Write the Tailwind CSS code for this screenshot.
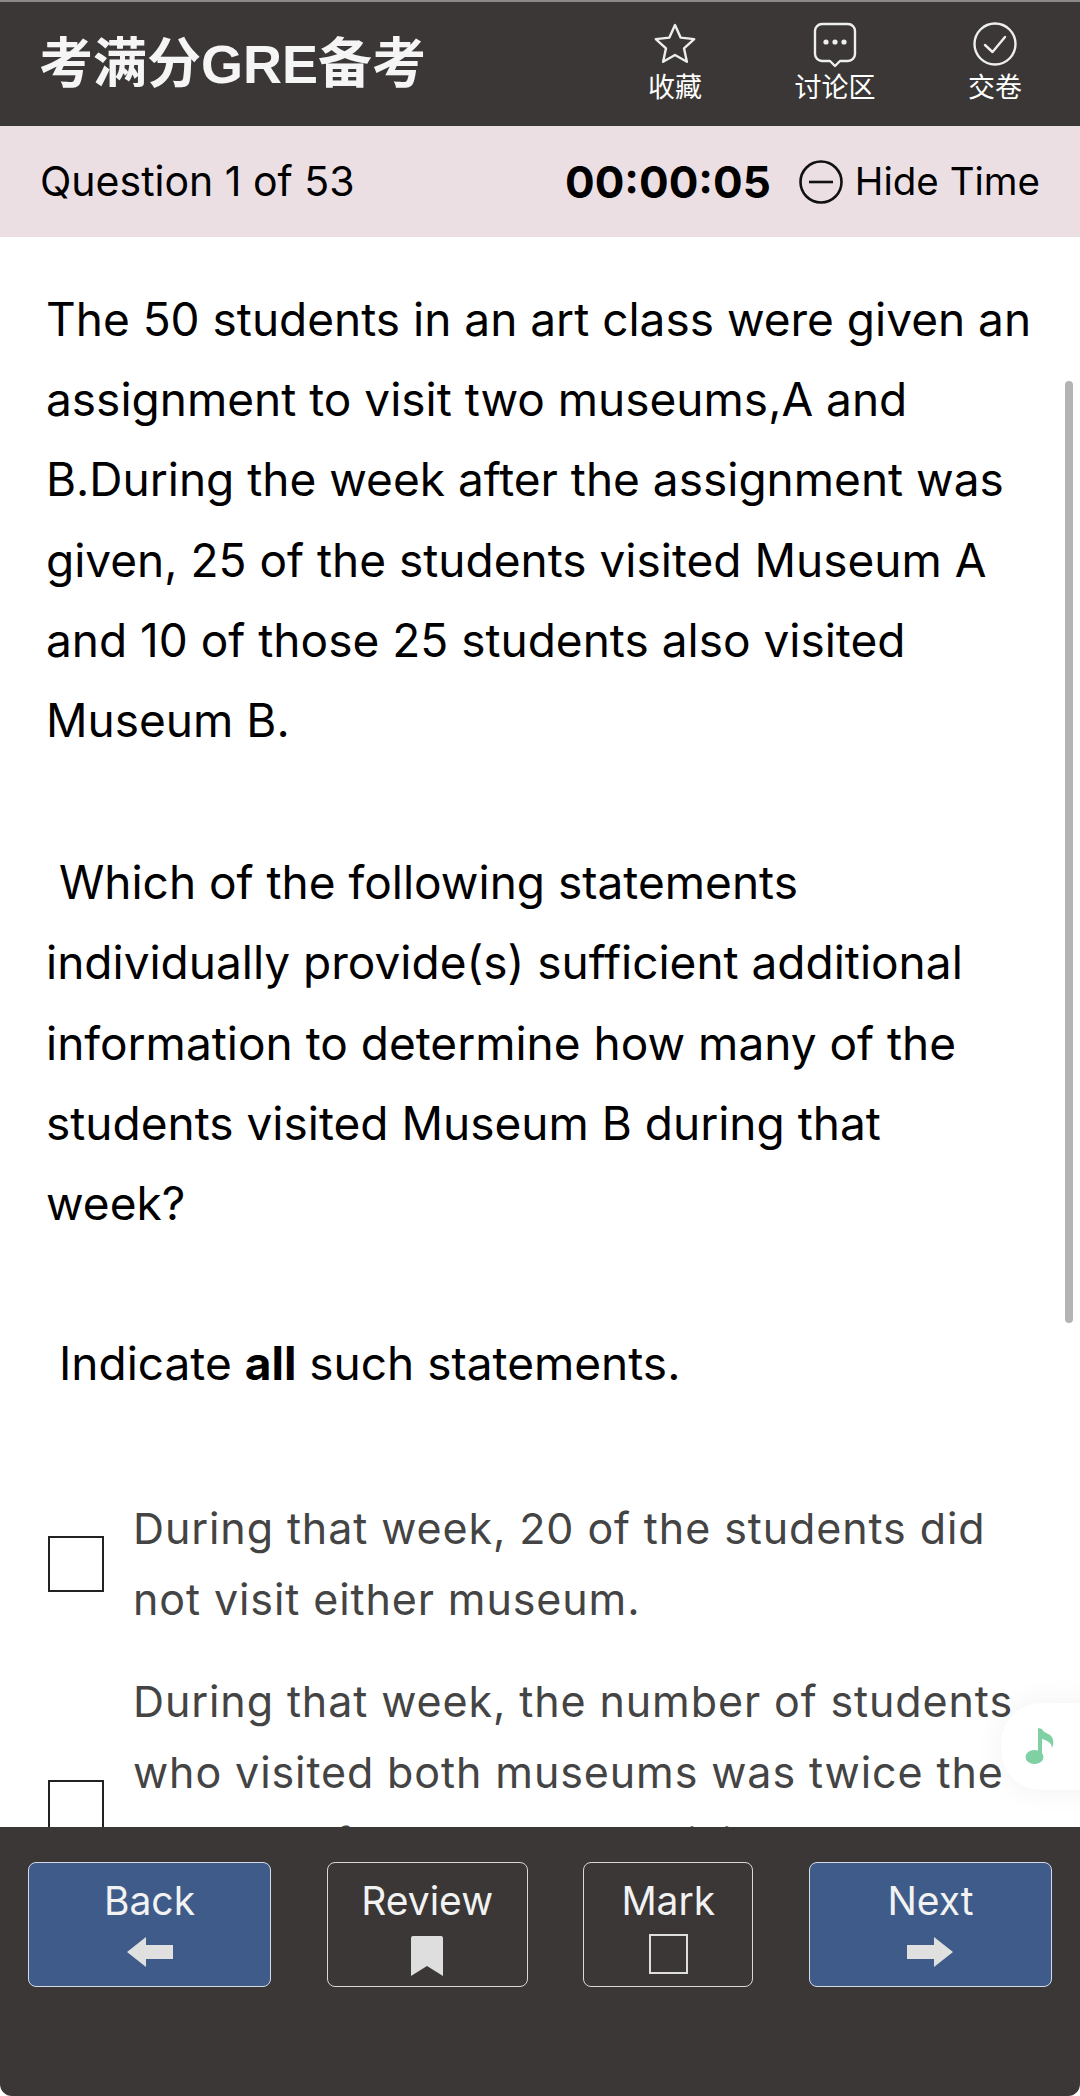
<!DOCTYPE html>
<html lang="zh-CN">
<head>
    <meta charset="UTF-8">
    <title>考满分GRE备考</title>
    <script src="https://cdn.jsdelivr.net/npm/@tailwindcss/browser@4"></script>
</head>
<body class="font-['Inter','Noto_Sans_CJK_SC',sans-serif] bg-white">
<div class="relative w-[1080px] h-[2096px] flex flex-col overflow-hidden">

    <!-- Header -->
    <header class="h-[126px] shrink-0 bg-[#3a3736] border-t-[2px] border-[#8c8a89] flex items-center text-white">
        <h1 class="ml-[39px] text-[54px] font-bold leading-none text-[#f5f5f5] mt-[-1px] font-['Liberation_Sans','Noto_Sans_CJK_SC',sans-serif]">考满分GRE备考</h1>
        <div class="ml-auto mr-[5px] flex h-full">
            <div class="w-[160px] flex flex-col items-center">
                <svg class="mt-[20px]" width="44" height="44" viewBox="0 0 44 44" fill="none" stroke="#eeeeee" stroke-width="2.4" stroke-linejoin="round"><path d="M22 3l5.6 12.6 13.600 1.500-10.200 9.200 2.900 13.500L22 33l-11.900 6.800 2.900-13.500-10.200-9.200 13.600-1.500z"/></svg>
                <span class="text-[27px] leading-[30px] mt-[7px]">收藏</span>
            </div>
            <div class="w-[160px] flex flex-col items-center">
                <svg class="mt-[20px]" width="44" height="46" viewBox="0 0 44 46" fill="none" stroke="#eeeeee" stroke-width="2.4" stroke-linejoin="round"><path d="M9 2h26a7 7 0 0 1 7 7v23a7 7 0 0 1-7 7h-8l-5 5-5-5H9a7 7 0 0 1-7-7V9a7 7 0 0 1 7-7z"/><circle cx="13" cy="20" r="2.600" fill="#eeeeee" stroke="none"/><circle cx="22" cy="20" r="2.600" fill="#eeeeee" stroke="none"/><circle cx="31" cy="20" r="2.600" fill="#eeeeee" stroke="none"/></svg>
                <span class="text-[27px] leading-[30px] mt-[5px]">讨论区</span>
            </div>
            <div class="w-[160px] flex flex-col items-center">
                <svg class="mt-[20px]" width="44" height="44" viewBox="0 0 44 44" fill="none" stroke="#eeeeee" stroke-width="2.400"><circle cx="22" cy="22" r="20.500"/><path d="M12 23l7.500 7L32 15" stroke-linecap="round" stroke-linejoin="round"/></svg>
                <span class="text-[27px] leading-[30px] mt-[7px]">交卷</span>
            </div>
        </div>
    </header>

    <!-- Timer strip -->
    <div class="h-[111px] shrink-0 bg-[#ecdfe4] flex items-center text-black">
        <span class="ml-[40px] text-[41px] leading-none">Question 1 of 53</span>
        <span class="ml-auto text-[44px] leading-none font-bold">00:00:05</span>
        <svg class="ml-[28px]" width="44" height="44" viewBox="0 0 44 44" fill="none" stroke="#111111" stroke-width="2.600"><circle cx="22" cy="22" r="20.500"/><path d="M10 22h24"/></svg>
        <span class="ml-[12px] mr-[40px] text-[38.5px] leading-none">Hide Time</span>
    </div>

    <!-- Question -->
    <main class="flex-1 min-h-0 overflow-hidden pt-[42px] text-black">
        <div class="pl-[46px] text-[46px] leading-[80.2px]">
            <p>The 50 students in an art class were given an<br>assignment to visit two museums,A and<br>B.During the week after the assignment was<br>given, 25 of the students visited Museum A<br>and 10 of those 25 students also visited<br>Museum B.</p>
            <p class="mt-[82px]">&nbsp;Which of the following statements<br>individually provide(s) sufficient additional<br>information to determine how many of the<br>students visited Museum B during that<br>week?</p>
            <p class="mt-[80px]">&nbsp;Indicate <b>all</b> such statements.</p>
        </div>

        <div class="mt-[90px] text-[43px] leading-[71px] tracking-[0.9px] text-[#444444]">
            <label class="flex items-center pl-[48px]">
                <span class="w-[56px] h-[56px] shrink-0 border-[2px] border-[#222222] bg-white"></span>
                <span class="ml-[29px]">During that week, 20 of the students did<br>not visit either museum.</span>
            </label>
            <label class="flex items-center pl-[48px] mt-[31px]">
                <span class="w-[56px] h-[56px] shrink-0 border-[2px] border-[#222222] bg-white"></span>
                <span class="ml-[29px]">During that week, the number of students<br>who visited both museums was twice the<br>number of students who visited only<br>Museum A.</span>
            </label>
        </div>
    </main>

    <!-- Scrollbar -->
    <div class="absolute left-[1065px] top-[381px] w-[8px] h-[942px] rounded-full bg-[#b4b4b4]"></div>

    <!-- Floating music button -->
    <div class="absolute left-[1001px] top-[1703px] w-[100px] h-[87px] rounded-l-[40px] bg-white shadow-[0_0_30px_rgba(0,0,0,0.06)] flex items-center pl-[24px]">
        <svg width="30" height="38" viewBox="0 0 30 38" fill="#7fd0a2"><ellipse cx="9.500" cy="29" rx="9" ry="7"/><path d="M13 0l4 1c1 3 5 4 8 6 4 3 4 9 2 13 0-4-3-7-10-9v18h-4z"/></svg>
    </div>

    <!-- Bottom bar -->
    <footer class="relative h-[269px] shrink-0 bg-[#3a3736] rounded-b-[12px] flex justify-between items-start pt-[35px] px-[28px] text-[#f2f2f2]">
        <button class="w-[243px] h-[125px] rounded-[8px] border-[1.5px] border-[#d5dbe6] bg-[#3e5b8a] flex flex-col items-center">
            <span class="text-[39px] leading-none mt-[18px]">Back</span>
            <svg class="mt-[17px]" width="46" height="30" viewBox="0 0 46 30" fill="#e0e0e0"><path d="M0 15 19 0v8h27v14H19v8z"/></svg>
        </button>
        <button class="w-[201px] h-[125px] rounded-[8px] border-[1.5px] border-[#d8d8d8] flex flex-col items-center">
            <span class="text-[39px] leading-none mt-[18px]">Review</span>
            <svg class="mt-[16px]" width="32" height="40" viewBox="0 0 32 40" fill="#dedede"><path d="M0 2a2 2 0 0 1 2-2h28a2 2 0 0 1 2 2v38L16 30 0 40z"/></svg>
        </button>
        <button class="w-[170px] h-[125px] rounded-[8px] border-[1.5px] border-[#d8d8d8] flex flex-col items-center">
            <span class="text-[39px] leading-none mt-[18px]">Mark</span>
            <span class="w-[39px] h-[40px] mt-[14px] border-[2px] border-[#dedede]"></span>
        </button>
        <button class="w-[243px] h-[125px] rounded-[8px] border-[1.5px] border-[#d5dbe6] bg-[#3e5b8a] flex flex-col items-center">
            <span class="text-[39px] leading-none mt-[18px]">Next</span>
            <svg class="mt-[17px]" width="46" height="30" viewBox="0 0 46 30" fill="#e0e0e0"><path d="M46 15 27 0v8H0v14h27v8z"/></svg>
        </button>
    </footer>
</div>
</body>
</html>
